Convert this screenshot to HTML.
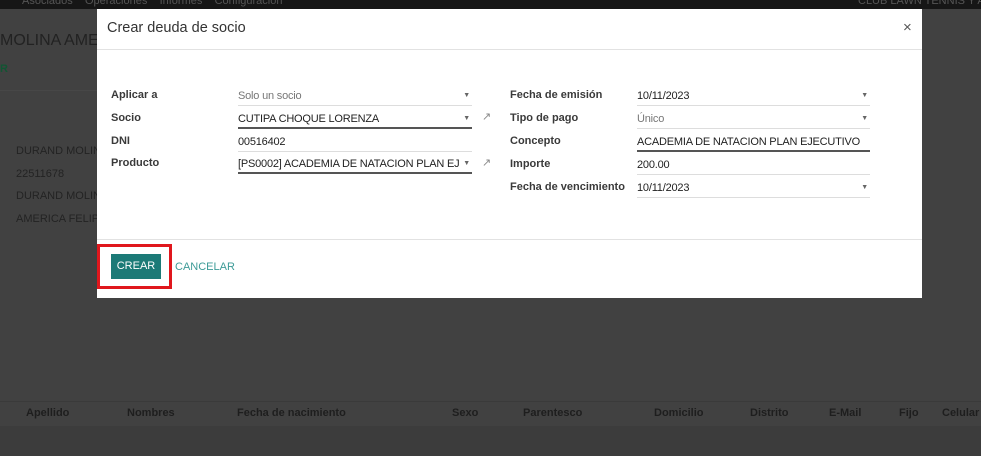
<!DOCTYPE html>
<html><head><meta charset="utf-8"><style>
body{margin:0;width:981px;height:456px;background:#414141;font-family:"Liberation Sans",sans-serif;position:relative;overflow:hidden}
.a{position:absolute;white-space:nowrap}
.top{position:absolute;left:0;top:0;width:981px;height:9px;background:#161616;overflow:hidden}
.modal{position:absolute;left:97px;top:9px;width:825px;height:289px;background:#fff}
.lbl{position:absolute;font-size:11px;font-weight:bold;color:#3a3a3a;white-space:nowrap}
.fld{position:absolute;font-size:11px;letter-spacing:-0.2px;color:#222;border-bottom:1px solid #ddd;height:18px;line-height:18px;white-space:nowrap;overflow:hidden}
.fld.dark{border-bottom:2px solid #555;height:17px}
.car{position:absolute;right:2px;top:0;font-size:7px;color:#666;background:#fff;padding-left:4px}
</style></head><body>
<div class="top"><span class="a" style="left:22px;top:-5px;color:#555;font-size:11px">Asociados &nbsp;&nbsp; Operaciones &nbsp;&nbsp; Informes &nbsp;&nbsp; Configuración</span><span class="a" style="left:858px;top:-5px;color:#555;font-size:11px">CLUB LAWN TENNIS Y A</span></div>
<div class="a" style="left:0;top:32px;font-size:16px;color:#222">MOLINA AMER</div>
<div class="a" style="left:0;top:63px;font-size:11px;color:#153;font-weight:bold">R</div>
<div class="a" style="left:0;top:90px;width:97px;height:1px;background:#474747"></div>
<div class="a" style="left:16px;top:140px;font-size:11px;color:#232323;line-height:22.5px">DURAND MOLIN<br>22511678<br>DURAND MOLIN<br>AMERICA FELIPA</div>
<div class="a" style="left:0;top:401px;width:981px;height:1px;background:#3a3a3a"></div>
<div class="a" style="left:0;top:426px;width:981px;height:30px;background:#3c3c3c"></div>
<div class="a" style="top:407px;font-size:11px;font-weight:bold;color:#1e1e1e;left:0;width:981px">
<span class="a" style="left:26px">Apellido</span><span class="a" style="left:127px">Nombres</span><span class="a" style="left:237px">Fecha de nacimiento</span><span class="a" style="left:452px">Sexo</span><span class="a" style="left:523px">Parentesco</span><span class="a" style="left:654px">Domicilio</span><span class="a" style="left:750px">Distrito</span><span class="a" style="left:829px">E-Mail</span><span class="a" style="left:899px">Fijo</span><span class="a" style="left:942px">Celular</span></div>
<div class="modal">
<div class="a" style="left:10px;top:11px;font-size:14.5px;color:#333">Crear deuda de socio</div>
<div class="a" style="left:806px;top:10px;font-size:15px;color:#555">×</div>
<div class="a" style="left:0;top:40px;width:825px;height:1px;background:#e2e2e2"></div>
<div class="lbl" style="left:14px;top:80px">Aplicar a</div>
<div class="lbl" style="left:14px;top:103px">Socio</div>
<div class="lbl" style="left:14px;top:126px">DNI</div>
<div class="lbl" style="left:14px;top:148px">Producto</div>
<div class="fld" style="left:141px;top:78px;width:234px;color:#777">Solo un socio<span class="car">▼</span></div>
<div class="fld dark" style="left:141px;top:101px;width:234px">CUTIPA CHOQUE LORENZA<span class="car">▼</span></div>
<div class="fld" style="left:141px;top:124px;width:234px">00516402</div>
<div class="fld dark" style="left:141px;top:146px;width:234px">[PS0002] ACADEMIA DE NATACION PLAN EJ<span class="car">▼</span></div>
<div class="a" style="left:385px;top:101px;font-size:11px;color:#888">↗</div>
<div class="a" style="left:385px;top:147px;font-size:11px;color:#888">↗</div>
<div class="lbl" style="left:413px;top:80px">Fecha de emisión</div>
<div class="lbl" style="left:413px;top:103px">Tipo de pago</div>
<div class="lbl" style="left:413px;top:126px">Concepto</div>
<div class="lbl" style="left:413px;top:149px">Importe</div>
<div class="lbl" style="left:413px;top:172px">Fecha de vencimiento</div>
<div class="fld" style="left:540px;top:78px;width:233px">10/11/2023<span class="car">▼</span></div>
<div class="fld" style="left:540px;top:101px;width:233px;color:#777">Único<span class="car">▼</span></div>
<div class="fld dark" style="left:540px;top:124px;width:233px">ACADEMIA DE NATACION PLAN EJECUTIVO</div>
<div class="fld" style="left:540px;top:147px;width:233px">200.00</div>
<div class="fld" style="left:540px;top:170px;width:233px">10/11/2023<span class="car">▼</span></div>
<div class="a" style="left:0;top:230px;width:825px;height:1px;background:#e2e2e2"></div>
<div class="a" style="left:0;top:235px;width:75px;height:45px;border:3px solid #e0171d;box-sizing:border-box"></div>
<div class="a" style="left:14px;top:245px;width:50px;height:25px;background:#1c7a77;color:#fff;font-size:11px;text-align:center;line-height:25px">CREAR</div>
<div class="a" style="left:78px;top:252px;font-size:11px;color:#3d9b97">CANCELAR</div>
</div>
</body></html>
